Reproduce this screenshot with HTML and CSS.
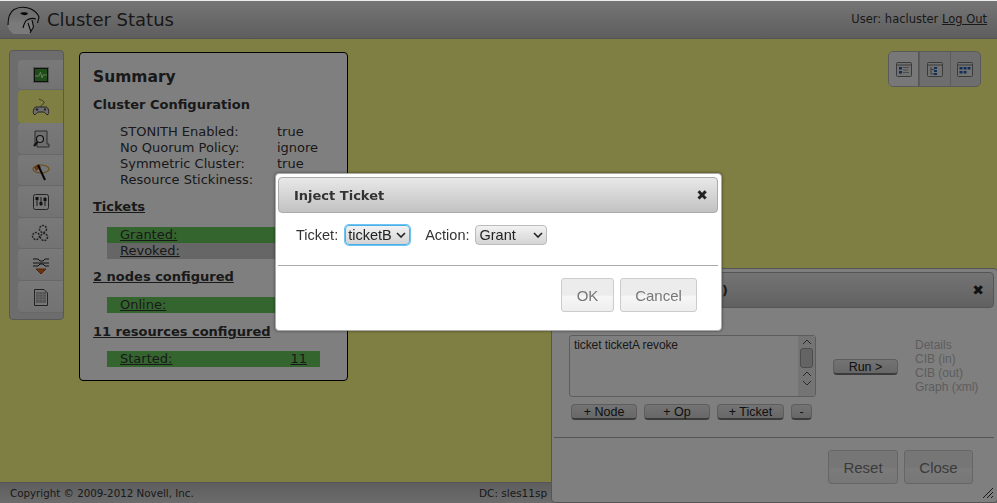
FILE: index.html
```html
<!DOCTYPE html>
<html lang="en">
<head>
    <meta charset="UTF-8">
    <title>Cluster Status</title>
    <link rel="stylesheet" href="styles.css">
</head>
<body>
    <div class="header">
        <svg class="logo" viewBox="5 3 36 33" width="36" height="33">
            <defs>
                <linearGradient id="headFill" x1="0" y1="0" x2="0" y2="1">
                    <stop offset="0" stop-color="#e0e0e0" stop-opacity="0"/>
                    <stop offset="0.600" stop-color="#f4f4f4"/>
                    <stop offset="1" stop-color="#f4f4f4"/>
                </linearGradient>
            </defs>
            <path d="M8 25 C8 18 10 12 14 9.500 C19 6.500 26 6.500 31 9 C35 11 38 14 39 17 L37.500 23 L35.500 19 L32 20 L33.500 27 L30 34 L14 34 C10.500 32.500 8 29 8 25 Z" fill="url(#headFill)"/>
            <path d="M8 25 C8 18 10 12 14 9.500 C19 6.500 26 6.500 31 9 C35 11 38 14 39 17 L37.500 23 M23 28 C24 24 25 21 27 20 C30 18 33 18 36 19 M28 23 L31 32 M32 20 L33.500 27 L30 33" fill="none" stroke="#111" stroke-width="1.100"/>
            <path d="M20 13 C22 12 26 12 28 13 C27 16 23 16 20 13 Z" fill="#111"/>
        </svg>
        <div class="app-title">Cluster Status</div>
        <div class="user-info">User: hacluster <a href="#">Log Out</a></div>
    </div>

    <div class="main">
        <div class="tabs">
            <div class="tab tab-first">
                <svg viewBox="0 0 16 16" width="16" height="16"><rect x="0.500" y="0.500" width="15" height="15" fill="#222" stroke="#aaa"/><rect x="2" y="2" width="12" height="12" fill="#3c9a34"/><path d="M2 9 H6 L7.500 5 L9 11 L10 8 H14" fill="none" stroke="#c8f8b0"/></svg>
            </div>
            <div class="tab tab-active">
                <svg viewBox="0 0 18 18" width="18" height="18"><path d="M9 9 C9 5 13 7 12 4 C11 2 8 2 7 1" fill="none" stroke="#555" stroke-width="0.800"/><path d="M4 9 H14 C16.500 9 17.500 15 16 16.500 C14 17.500 13 14 12 14 H6 C5 14 4 17.500 2 16.500 C0.500 15 1.500 9 4 9 Z" fill="#ddd" stroke="#444"/><circle cx="13" cy="11.500" r="1.200" fill="#555"/><path d="M3.500 11.500 H6.500 M5 10 V13" stroke="#444"/></svg>
            </div>
            <div class="tab">
                <svg viewBox="0 0 18 18" width="18" height="18"><path d="M3 1 H15 V14 H17 V17 H5 V14 H3 Z" fill="#ddd" stroke="#555"/><circle cx="8" cy="9" r="3.500" fill="#eee" stroke="#222" stroke-width="1.200"/><path d="M5.500 12 L2 16" stroke="#222" stroke-width="2"/></svg>
            </div>
            <div class="tab">
                <svg viewBox="0 0 20 20" width="20" height="20"><ellipse cx="10" cy="8" rx="8" ry="4" fill="none" stroke="#d49a30" stroke-width="1.200"/><path d="M3 6 L8 3 L10 6 L5 10 Z" fill="#d2691e"/><path d="M7 4 L14 19" stroke="#111" stroke-width="2"/></svg>
            </div>
            <div class="tab">
                <svg viewBox="0 0 16 16" width="16" height="16"><rect x="0.500" y="0.500" width="15" height="15" rx="2" fill="#eee" stroke="#444"/><path d="M4 3 V12 M8 3 V12 M12 3 V12" stroke="#333"/><rect x="2.500" y="3" width="3" height="3" fill="#222"/><rect x="6.500" y="8" width="3" height="3" fill="#222"/><rect x="10.500" y="4" width="3" height="3" fill="#222"/></svg>
            </div>
            <div class="tab">
                <svg viewBox="0 0 20 20" width="20" height="20"><g fill="none" stroke="#444" stroke-width="1.500" stroke-dasharray="2 1"><circle cx="12" cy="5" r="3.500"/><circle cx="5" cy="12" r="3.500"/><circle cx="13" cy="13" r="3.500"/></g></svg>
            </div>
            <div class="tab">
                <svg viewBox="0 0 20 20" width="20" height="20"><path d="M2 3 H7 L9 5 H12 L14 3 H18 M2 7 H18 M2 10 H7 L9 8 H12 L14 10 H18" fill="none" stroke="#222"/><path d="M5 13 H15 L10 18 Z" fill="#d2691e" stroke="#a04a10"/></svg>
            </div>
            <div class="tab">
                <svg viewBox="0 0 14 17" width="14" height="17"><path d="M0.500 0.500 H10 L13.500 4 V16.500 H0.500 Z" fill="#eee" stroke="#444"/><rect x="2" y="3" width="10" height="11" fill="#aaa"/><path d="M2 5.500 H12 M2 8 H12 M2 10.500 H12 M5 3 V14 M8.500 3 V14" stroke="#ddd" stroke-width="0.500"/></svg>
            </div>
        </div>

        <div class="summary">
            <h1>Summary</h1>
            <h2>Cluster Configuration</h2>
            <div class="config">
                <div class="row"><span>STONITH Enabled:</span><span>true</span></div>
                <div class="row"><span>No Quorum Policy:</span><span>ignore</span></div>
                <div class="row"><span>Symmetric Cluster:</span><span>true</span></div>
                <div class="row"><span>Resource Stickiness:</span></div>
            </div>
            <h3><a href="#">Tickets</a></h3>
            <div class="band band-green"><a href="#">Granted:</a></div>
            <div class="band band-grey"><a href="#">Revoked:</a></div>
            <h3><a href="#">2 nodes configured</a></h3>
            <div class="band band-green"><a href="#">Online:</a></div>
            <h3 class="tight"><a href="#">11 resources configured</a></h3>
            <div class="band band-green"><a href="#">Started:</a><a href="#">11</a></div>
        </div>

        <div class="view-switch">
            <div class="view-btn view-btn-active">
                <svg viewBox="0 0 16 15" width="16" height="15"><rect x="0.500" y="0.500" width="15" height="14" rx="1" fill="#e4e4e4" stroke="#777"/><path d="M1 3 H15" stroke="#777"/><rect x="3" y="5" width="3" height="2.500" fill="#1f5fb0"/><rect x="3" y="9" width="3" height="2.500" fill="#1f5fb0"/><path d="M7 5.500 H13 M7 8 H12 M7 10.500 H13" stroke="#999"/></svg>
            </div>
            <div class="view-btn">
                <svg viewBox="0 0 16 15" width="16" height="15"><rect x="0.500" y="0.500" width="15" height="14" rx="1" fill="#e4e4e4" stroke="#777"/><path d="M1 3 H15 M4 5 V12 H7 M4 7.500 H7" stroke="#777" fill="none"/><rect x="7" y="5" width="3" height="2" fill="#1f5fb0"/><rect x="7" y="8" width="3" height="2" fill="#1f5fb0"/><rect x="7" y="11" width="3" height="2" fill="#1f5fb0"/></svg>
            </div>
            <div class="view-btn">
                <svg viewBox="0 0 16 15" width="16" height="15"><rect x="0.500" y="0.500" width="15" height="14" rx="1" fill="#e4e4e4" stroke="#777"/><path d="M1 3 H15" stroke="#777"/><rect x="2.500" y="5" width="3" height="2.500" fill="#1f5fb0"/><rect x="6.500" y="5" width="3" height="2.500" fill="#1f5fb0"/><rect x="10.500" y="5" width="3" height="2.500" fill="#1f5fb0"/><rect x="2.500" y="9" width="3" height="2.500" fill="#1f5fb0"/><rect x="6.500" y="9" width="3" height="2.500" fill="#1f5fb0"/></svg>
            </div>
        </div>
    </div>

    <div class="footer">
        <div class="copyright">Copyright © 2009-2012 Novell, Inc.</div>
        <div class="dc">DC: sles11sp</div>
    </div>

    <!-- simulator dialog, sits under the overlay -->
    <div class="dialog sim-dialog">
        <div class="dialog-title sim-title">
            <span>)</span>
            <span class="close">✖</span>
        </div>
        <div class="sim-body">
            <div class="sim-left">
                <div class="injections">
                    <div class="inj-text">ticket ticketA revoke</div>
                    <div class="scrollbar">
                        <svg class="arrow" viewBox="0 0 10 6" width="10" height="6"><path d="M1 5 L5 1 L9 5" fill="none" stroke="#555"/></svg>
                        <div class="thumb"></div>
                        <svg class="arrow" viewBox="0 0 10 6" width="10" height="6"><path d="M1 5 L5 1 L9 5" fill="none" stroke="#555"/></svg>
                        <svg class="arrow" viewBox="0 0 10 6" width="10" height="6"><path d="M1 1 L5 5 L9 1" fill="none" stroke="#555"/></svg>
                    </div>
                </div>
                <div class="inj-buttons">
                    <button class="small-btn btn-node">+ Node</button>
                    <button class="small-btn btn-node">+ Op</button>
                    <button class="small-btn btn-ticket">+ Ticket</button>
                    <button class="small-btn btn-minus">-</button>
                </div>
            </div>
            <button class="small-btn btn-run">Run &gt;</button>
            <div class="sim-links">
                <div>Details</div>
                <div>CIB (in)</div>
                <div>CIB (out)</div>
                <div>Graph (xml)</div>
            </div>
        </div>
        <div class="dialog-rule"></div>
        <div class="dialog-actions">
            <button class="big-btn btn-reset">Reset</button>
            <button class="big-btn btn-close">Close</button>
        </div>
        <svg class="resize-grip" viewBox="0 0 12 12" width="12" height="12"><path d="M1 11 L11 1 M5 11 L11 5 M9 11 L11 9" stroke="#333"/></svg>
    </div>

    <div class="overlay"></div>

    <div class="dialog ticket-dialog">
        <div class="dialog-title">
            <span>Inject Ticket</span>
            <span class="close">✖</span>
        </div>
        <div class="ticket-form">
            <label>Ticket:</label>
            <div class="select-box select-ticket select-focus">
                <span>ticketB</span>
                <svg viewBox="0 0 10 6" width="10" height="6"><path d="M1 1 L5 5 L9 1" fill="none" stroke="#222" stroke-width="1.600"/></svg>
            </div>
            <label class="label-action">Action:</label>
            <div class="select-box select-action">
                <span>Grant</span>
                <svg viewBox="0 0 10 6" width="10" height="6"><path d="M1 1 L5 5 L9 1" fill="none" stroke="#222" stroke-width="1.600"/></svg>
            </div>
        </div>
        <div class="dialog-rule"></div>
        <div class="dialog-actions">
            <button class="big-btn btn-ok">OK</button>
            <button class="big-btn btn-cancel">Cancel</button>
        </div>
    </div>
</body>
</html>
```

FILE: styles.css
```css
* { margin: 0; padding: 0; box-sizing: border-box; }
html, body { height: 100%; overflow: hidden; }
body { font-family: "DejaVu Sans", sans-serif; font-size: 13px; color: #333; display: flex; flex-direction: column; background-color: #ffff86; }
a { color: inherit; }

.header { height: 39px; flex: none; display: flex; align-items: center; padding: 0 10px 0 5px; background: linear-gradient(#ececec, #bcbcbc); border-bottom: 1px solid #a8a8a8; }
.logo { flex: none; }
.app-title { font-size: 18px; margin-left: 6px; color: #333; flex: 1; }
.user-info { font-size: 11.500px; color: #333; }

.main { flex: 1; display: flex; align-items: flex-start; padding: 11px 16px 0 9px; }

.tabs { width: 55px; height: 270px; flex: none; padding: 9px 0 0 8px; background-color: #dadada; border: 1px solid #b0b0b0; border-radius: 4px; }
.tab { height: 31.600px; padding-top: 2px; display: flex; justify-content: center; align-items: center; background: linear-gradient(#f2f2f2, #e6e6e6); border-bottom: 1px solid #d0d0d0; border-radius: 4px 0 0 4px; }
.tab-first { height: 30px; padding-top: 0; }
.tab-active { height: 33px; background: #ffff86; border-color: #ffff86; }

.summary { width: 269px; height: 329px; flex: none; margin: 2px 0 0 15px; padding: 14px 13px 0; background-color: #fff; border: 1px solid #000; border-radius: 4px; }
h1 { font-size: 15.500px; line-height: 20px; }
h2 { font-size: 13px; line-height: 16px; margin-top: 10px; }
.config { margin: 11px 0 0 27px; }
.row { display: grid; grid-template-columns: 157px 1fr; height: 16px; line-height: 16px; }
h3 { font-size: 13px; line-height: 16px; margin-top: 11px; }
.band { width: 213px; height: 16px; line-height: 16px; margin-left: 14px; padding: 0 13px; display: flex; justify-content: space-between; }
h3 + .band { margin-top: 12px; }
.band + h3 { margin-top: 10px; }
.band + h3.tight { margin-top: 11px; }
h3.tight + .band { margin-top: 11px; }
.band-green { background-color: #6aca5e; }
.band-grey { background-color: #cccccc; }

.view-switch { margin: 1px 0 0 auto; display: flex; width: 93px; height: 36px; border: 1px solid #b4b4b4; border-radius: 5px; background-color: #dcdcdc; }
.view-btn { flex: 1; display: flex; align-items: center; justify-content: center; border-left: 1px solid #bbb; }
.view-btn:first-child { border-left: none; }
.view-btn-active { background-color: #f0f0f0; border-right: 1px solid #aaa; border-radius: 4px 0 0 4px; }

.footer { height: 21px; flex: none; display: flex; align-items: center; padding: 0 10px; font-size: 10.300px; background: linear-gradient(#bcbcbc, #d8d8d8); border-top: 1px solid #aaa; color: #333; }
.copyright { width: 469px; }
.dc { font-size: 10.500px; white-space: nowrap; }

.overlay { position: fixed; left: 0; right: 0; top: 1px; bottom: 0; background-color: rgba(0, 0, 0, 0.5); }

.dialog { position: fixed; background-color: #fff; border: 1px solid #aaa; border-radius: 4px; padding: 3px 3px 3px 2px; font-family: "Liberation Sans", sans-serif; font-size: 14.500px; }
.ticket-dialog { left: 275px; top: 173px; width: 447px; height: 158px; box-shadow: 0 0 3px rgba(0, 0, 0, 0.5); }
.sim-dialog { left: 551px; top: 268px; width: 447px; height: 235px; }

.dialog-title { height: 36px; display: flex; justify-content: space-between; align-items: center; padding: 0 9px 0 15px; font-family: "DejaVu Sans", sans-serif; font-size: 13px; font-weight: bold; color: #333; background: linear-gradient(#e8e8e8, #c2c2c2); border: 1px solid #aaa; border-radius: 4px; }
.sim-title { padding-left: 167px; }
.close { font-size: 14px; color: #222; }
.dialog-rule { height: 1px; background-color: #aaa; }

.ticket-form { height: 52px; display: flex; align-items: center; padding: 0 0 8px 18px; }
.ticket-form label { color: #333; }
.label-action { margin-left: 15px; }
.select-box { height: 20px; margin-left: 7px; display: flex; align-items: center; justify-content: space-between; padding: 0 3px 0 4px; color: #222; background: linear-gradient(#f2f2f2, #d4d4d4); border: 1px solid #bbb; border-radius: 4px; }
.select-ticket { width: 65px; padding-left: 2px; }
.select-action { width: 72px; margin-left: 5px; }
.select-focus { border-color: #4ab0ea; box-shadow: 0 0 0 1px #6cc4f2; }

.dialog-actions { display: flex; justify-content: flex-end; gap: 6px; padding: 12px 21px 0 0; }
.big-btn { height: 34px; font-family: "Liberation Sans", sans-serif; font-size: 15px; color: #777; background: linear-gradient(#ececec 50%, #f6f6f6 55%, #eeeeee); border: 1px solid #ccc; border-radius: 3px; }
.btn-ok { width: 53px; }
.btn-cancel { width: 77px; }
.btn-reset { width: 70px; }
.btn-close { width: 69px; }

.sim-body { height: 129px; display: flex; align-items: flex-start; padding: 27px 0 0 15px; }
.sim-left { width: 247px; flex: none; }
.injections { height: 62px; display: flex; justify-content: space-between; background-color: #fff; border: 1px solid #bbb; border-radius: 3px; }
.inj-text { font-size: 12px; padding: 2px 4px; color: #333; letter-spacing: -0.100px; }
.scrollbar { width: 17px; display: flex; flex-direction: column; align-items: center; gap: 3px; padding-top: 3px; background-color: #e8e8e8; }
.arrow { flex: none; }
.thumb { width: 13px; height: 20px; background-color: #c8c8c8; border: 1px solid #999; border-radius: 3px; }
.inj-buttons { display: flex; gap: 7px; padding: 7px 0 0 2px; }
.small-btn { height: 16px; font-family: "Liberation Sans", sans-serif; font-size: 12.500px; color: #222; background: linear-gradient(#e8e8e8, #cfcfcf); border: 1px solid #bbb; border-bottom: 2px solid #777; border-radius: 4px; }
.btn-node { width: 66px; flex: none; }
.btn-ticket { width: 67px; flex: none; }
.btn-minus { width: 21px; flex: none; }
.btn-run { width: 65px; margin: 24px 0 0 17px; flex: none; }
.sim-links { margin: 3px 0 0 17px; font-size: 12px; line-height: 14px; color: #bbb; }
.resize-grip { position: absolute; right: 3px; bottom: 3px; }
```
